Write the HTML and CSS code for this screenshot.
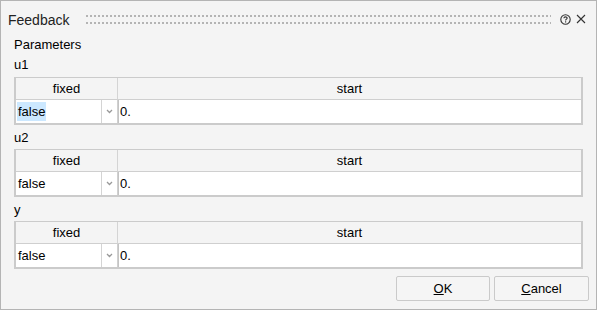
FILE: index.html
```html
<!DOCTYPE html>
<html>
<head>
<meta charset="UTF-8">
<title>Feedback</title>
<link rel="stylesheet" href="styles.css">
</head>
<body>
<div class="dialog">
  <div class="titlebar">
    <span class="title">Feedback</span>
    <div class="grip"><span class="dots"></span><span class="dots"></span></div>
    <svg class="help" width="11" height="11" viewBox="0 0 11 11">
      <circle cx="5.5" cy="5.5" r="4.7" fill="none" stroke="#333" stroke-width="1.1"/>
      <path d="M3.9 4.3 C3.9 3.3 4.6 2.9 5.5 2.9 C6.4 2.9 7.1 3.4 7.1 4.2 C7.1 5.1 5.6 5.2 5.6 6.4" fill="none" stroke="#333" stroke-width="1.1"/>
      <rect x="5" y="7.3" width="1.2" height="1.2" fill="#333"/>
    </svg>
    <svg class="close" width="10" height="10" viewBox="0 0 10 10">
      <path d="M1 1 L9 9 M9 1 L1 9" stroke="#333" stroke-width="1.1"/>
    </svg>
  </div>

  <div class="content">
    <div class="section">Parameters</div>

    <div class="plabel first">u1</div>
    <div class="ptable">
      <div class="hcell">fixed</div>
      <div class="hcell last">start</div>
      <div class="combo"><span class="val sel">false</span><span class="drop"><svg width="7" height="5" viewBox="0 0 7 5"><path d="M1 1 L3.5 3.5 L6 1" fill="none" stroke="#999" stroke-width="1.3"/></svg></span></div>
      <div class="edit">0.</div>
    </div>

    <div class="plabel">u2</div>
    <div class="ptable">
      <div class="hcell">fixed</div>
      <div class="hcell last">start</div>
      <div class="combo"><span class="val">false</span><span class="drop"><svg width="7" height="5" viewBox="0 0 7 5"><path d="M1 1 L3.5 3.5 L6 1" fill="none" stroke="#999" stroke-width="1.3"/></svg></span></div>
      <div class="edit">0.</div>
    </div>

    <div class="plabel">y</div>
    <div class="ptable">
      <div class="hcell">fixed</div>
      <div class="hcell last">start</div>
      <div class="combo"><span class="val">false</span><span class="drop"><svg width="7" height="5" viewBox="0 0 7 5"><path d="M1 1 L3.5 3.5 L6 1" fill="none" stroke="#999" stroke-width="1.3"/></svg></span></div>
      <div class="edit">0.</div>
    </div>
  </div>

  <div class="buttons">
    <div class="btn ok"><u>O</u>K</div>
    <div class="btn cancel"><u>C</u>ancel</div>
  </div>
</div>
</body>
</html>
```

FILE: styles.css
```css
body { margin: 0; font-family: "Liberation Sans", Arial, sans-serif; color: #000; }
.dialog { width: 597px; height: 310px; box-sizing: border-box; border: 1px solid #b4b4b4; background: #f4f4f4; display: flex; flex-direction: column; }

.titlebar { height: 36px; display: flex; align-items: center; padding: 0 10px 0 7px; }
.title { font-size: 14px; color: #222; margin-top: 1px; }
.grip { flex: 1; margin: 0 9px 0 17px; display: flex; flex-direction: column; gap: 5px; }
.dots { height: 2px; background-image: linear-gradient(90deg, #b4b4b4 2px, transparent 2px); background-size: 4px 2px; }
.help { margin-right: 5px; }

.content { padding: 0 13px 0 13px; font-size: 13px; flex: 1; }
.section { line-height: 16px; }
.plabel { line-height: 16px; padding: 5px 0 3px; }
.plabel.first { padding: 4px 0 4px; }

.ptable { display: grid; grid-template-columns: 102px 1fr; border: 2px solid #cbcbcb; border-top-width: 1px; background: #fff; }
.hcell { height: 21px; line-height: 21px; text-align: center; background: #f4f4f4; border-right: 1px solid #d4d4d4; border-bottom: 1px solid #cfcfcf; }
.hcell.last { border-right: none; }
.combo { height: 23px; box-sizing: border-box; display: flex; border-right: 1px solid #d0d0d0; }
.val { flex: 1; line-height: 23px; padding-left: 2px; }
.val.sel { flex: none; background: #cce8ff; line-height: 19px; margin: 2px 0 2px 1px; padding: 0 1px 0 1px; }
.combo .val.sel + .drop { margin-left: auto; }
.drop { width: 15px; border-left: 1px solid #d4d4d4; display: flex; align-items: center; justify-content: center; }
.edit { height: 23px; line-height: 23px; padding-left: 1px; border-left: 1px solid #c4c4c4; }

.buttons { display: flex; justify-content: flex-end; gap: 4px; padding: 0 7px 8px 0; }
.btn { height: 25px; box-sizing: border-box; border: 1px solid #cacaca; border-radius: 2px; font-size: 13px; line-height: 23px; text-align: center; background: #f5f5f5; }
.ok { width: 94px; }
.cancel { width: 95px; }
```
